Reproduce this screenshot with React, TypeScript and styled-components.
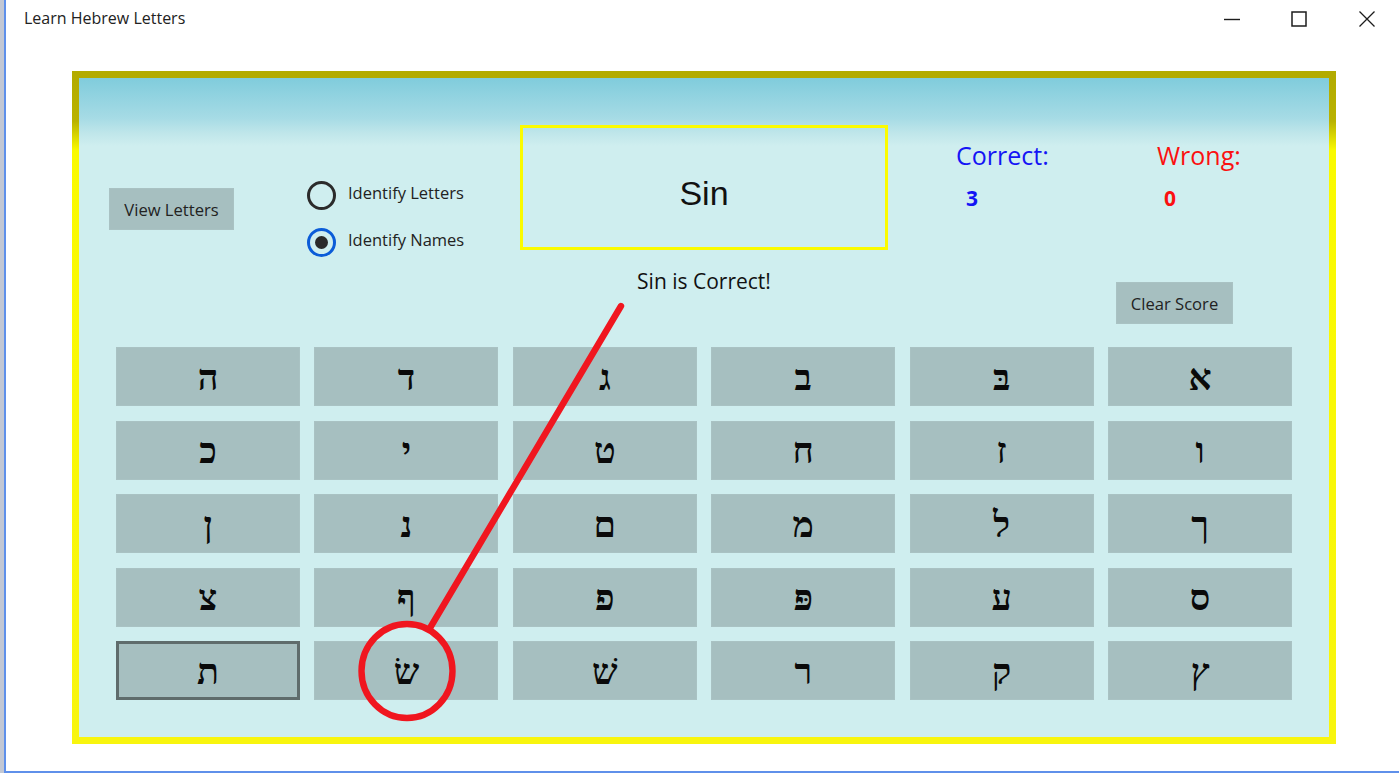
import React from "react";
import styled, { createGlobalStyle } from "styled-components";

const Global = createGlobalStyle`
  html, body { margin: 0; padding: 0; background: #ffffff; }
  body { overflow: hidden; }
`;

const Desktop = styled.div`
  width: 1399px;
  height: 773px;
  display: flex;
  background: #c3c8d4;
  overflow: hidden;
`;

const Frame = styled.div`
  margin-left: 4px;
  flex: 1;
  height: 773px;
  background: #ffffff;
  border-left: 2px solid #5f90ea;
  border-bottom: 2px solid #5f90ea;
  box-sizing: border-box;
  display: flex;
  flex-direction: column;
`;

const TitleBar = styled.div`
  height: 71px;
  flex: none;
  display: flex;
  align-items: flex-start;
  font-family: "Open Sans", sans-serif;
`;

const Title = styled.div`
  margin: 8px 0 0 18px;
  font-size: 16px;
  line-height: 20px;
  color: #222;
  flex: 1;
`;

const WinButton = styled.svg`
  width: 18px;
  height: 18px;
  margin-top: 10px;
  margin-right: ${(p: { $gap: number }) => p.$gap}px;
  fill: none;
  stroke: #1c1c1c;
`;

const Panel = styled.div`
  margin-left: 66px;
  width: 1264px;
  height: 673px;
  box-sizing: border-box;
  border: 7px solid transparent;
  border-image: linear-gradient(180deg, #b3ab00 0, #b9b200 45px, #fafa00 75px, #f8f50e 100%) 1;
  background: linear-gradient(180deg, #80ccdc 0, #a6dbe5 40px, #bfe6ea 55px, #cfeeef 68px, #cfeeef 100%);
  background-origin: padding-box;
  background-clip: padding-box;
  position: relative;
  display: flex;
  flex-direction: column;
`;

const Top = styled.div`
  height: 269px;
  flex: none;
  display: flex;
  font-family: "Open Sans", sans-serif;
`;

const Action = styled.button`
  font-family: "Open Sans", sans-serif;
  font-size: 16.6px;
  color: #222;
  background: #a6bfc0;
  border: 1px solid #a9c2c3;
  padding: 0;
  height: 42px;
  width: ${(p: { $w: number }) => p.$w}px;
`;

const LeftCol = styled.div`
  width: 198px;
  margin-left: 30px;
  padding-top: 110px;
  flex: none;
`;

const RadioCol = styled.div`
  width: 213px;
  flex: none;
  padding-top: 103px;
  display: flex;
  flex-direction: column;
  gap: 18px;
`;

const RadioRow = styled.div`
  display: flex;
  align-items: flex-start;
  gap: 12px;
  height: 29px;
  font-size: 16.5px;
  line-height: 24px;
  color: #222;
`;

const RadioMark = styled.span<{ $on?: boolean }>`
  box-sizing: border-box;
  width: 29px;
  height: 29px;
  border-radius: 50%;
  border: 3px solid ${(p) => (p.$on ? "#0b5cd8" : "#2b2b2b")};
  display: flex;
  align-items: center;
  justify-content: center;
  &::after {
    content: "";
    display: ${(p) => (p.$on ? "block" : "none")};
    width: 13px;
    height: 13px;
    border-radius: 50%;
    background: #2a2a2a;
  }
`;

const CenterCol = styled.div`
  width: 368px;
  flex: none;
  padding-top: 47px;
  display: flex;
  flex-direction: column;
  align-items: center;
`;

const PromptBox = styled.div`
  box-sizing: border-box;
  width: 368px;
  height: 125px;
  padding-top: 12px;
  border: 3px solid #fbfb00;
  display: flex;
  align-items: center;
  justify-content: center;
  font-family: "Liberation Sans", Arial, sans-serif;
  font-size: 34px;
  color: #111;
`;

const Feedback = styled.div`
  margin-top: 18px;
  font-size: 21px;
  line-height: 26px;
  color: #111;
`;

const ScoreArea = styled.div`
  flex: 1;
  padding-top: 59px;
  padding-left: 68px;
  display: flex;
  flex-direction: column;
`;

const ScoreRow = styled.div`
  display: flex;
  height: 145px;
`;

const Score = styled.div<{ $color: string; $w: number }>`
  width: ${(p) => p.$w}px;
  color: ${(p) => p.$color};
`;

const ScoreLabel = styled.div`
  font-size: 25px;
  line-height: 36px;
`;

const ScoreValue = styled.div`
  font-size: 21px;
  font-weight: 700;
  line-height: 26px;
  margin-top: 12px;
  margin-left: ${(p: { $ml: number }) => p.$ml}px;
`;

const ClearWrap = styled.div`
  padding-left: 160px;
`;

const Grid = styled.div`
  margin-left: 37px;
  width: 1176px;
  display: grid;
  direction: rtl;
  grid-template-columns: repeat(6, 184px);
  grid-auto-rows: 59px;
  column-gap: 14.4px;
  row-gap: 14.5px;
`;

const Letter = styled.button<{ $focus?: boolean }>`
  box-sizing: border-box;
  background: #a6bfc0;
  border: ${(p) => (p.$focus ? "3px solid #5f6c6c" : "1px solid #a9c2c3")};
  font-family: "Liberation Serif", "Times New Roman", serif;
  font-size: 36px;
  font-weight: 700;
  line-height: 1;
  color: #0a0a0a;
  padding: 2px 0 0;
  display: flex;
  align-items: center;
  justify-content: center;
`;

const Annotation = styled.svg`
  position: absolute;
  left: -7px;
  top: -7px;
  width: 1264px;
  height: 673px;
  pointer-events: none;
  fill: none;
  stroke: #f0161f;
  stroke-width: 6.4px;
  stroke-linecap: round;
`;

const letters = [
  "א", "בּ", "ב", "ג", "ד", "ה",
  "ו", "ז", "ח", "ט", "י", "כ",
  "ך", "ל", "מ", "ם", "נ", "ן",
  "ס", "ע", "פּ", "פ", "ף", "צ",
  "ץ", "ק", "ר", "שׁ", "שׂ", "ת",
];

export default function App() {
  return (
    <Desktop>
      <Global />
      <Frame>
        <TitleBar>
          <Title>Learn Hebrew Letters</Title>
          <WinButton $gap={49} viewBox="0 0 18 18">
            <path d="M1 9.5H17" strokeWidth="1.4" />
          </WinButton>
          <WinButton $gap={50} viewBox="0 0 18 18">
            <rect x="2" y="2" width="14" height="14" strokeWidth="1.5" />
          </WinButton>
          <WinButton $gap={23} viewBox="0 0 18 18">
            <path d="M1.5 1.5L16.5 16.5M16.5 1.5L1.5 16.5" strokeWidth="1.3" />
          </WinButton>
        </TitleBar>
        <Panel>
          <Top>
            <LeftCol>
              <Action $w={125}>View Letters</Action>
            </LeftCol>
            <RadioCol>
              <RadioRow>
                <RadioMark />
                Identify Letters
              </RadioRow>
              <RadioRow>
                <RadioMark $on />
                Identify Names
              </RadioRow>
            </RadioCol>
            <CenterCol>
              <PromptBox>Sin</PromptBox>
              <Feedback>Sin is Correct!</Feedback>
            </CenterCol>
            <ScoreArea>
              <ScoreRow>
                <Score $color="#1414f5" $w={201}>
                  <ScoreLabel>Correct:</ScoreLabel>
                  <ScoreValue $ml={10}>3</ScoreValue>
                </Score>
                <Score $color="#fb1010" $w={150}>
                  <ScoreLabel>Wrong:</ScoreLabel>
                  <ScoreValue $ml={7}>0</ScoreValue>
                </Score>
              </ScoreRow>
              <ClearWrap>
                <Action $w={117}>Clear Score</Action>
              </ClearWrap>
            </ScoreArea>
          </Top>
          <Grid>
            {letters.map((l, i) => (
              <Letter key={i} $focus={l === "ת"}>
                {l}
              </Letter>
            ))}
          </Grid>
          <Annotation viewBox="0 0 1264 673">
            <path d="M549 235L358 557" />
            <ellipse cx="335" cy="600" rx="45.5" ry="47" />
          </Annotation>
        </Panel>
      </Frame>
    </Desktop>
  );
}
